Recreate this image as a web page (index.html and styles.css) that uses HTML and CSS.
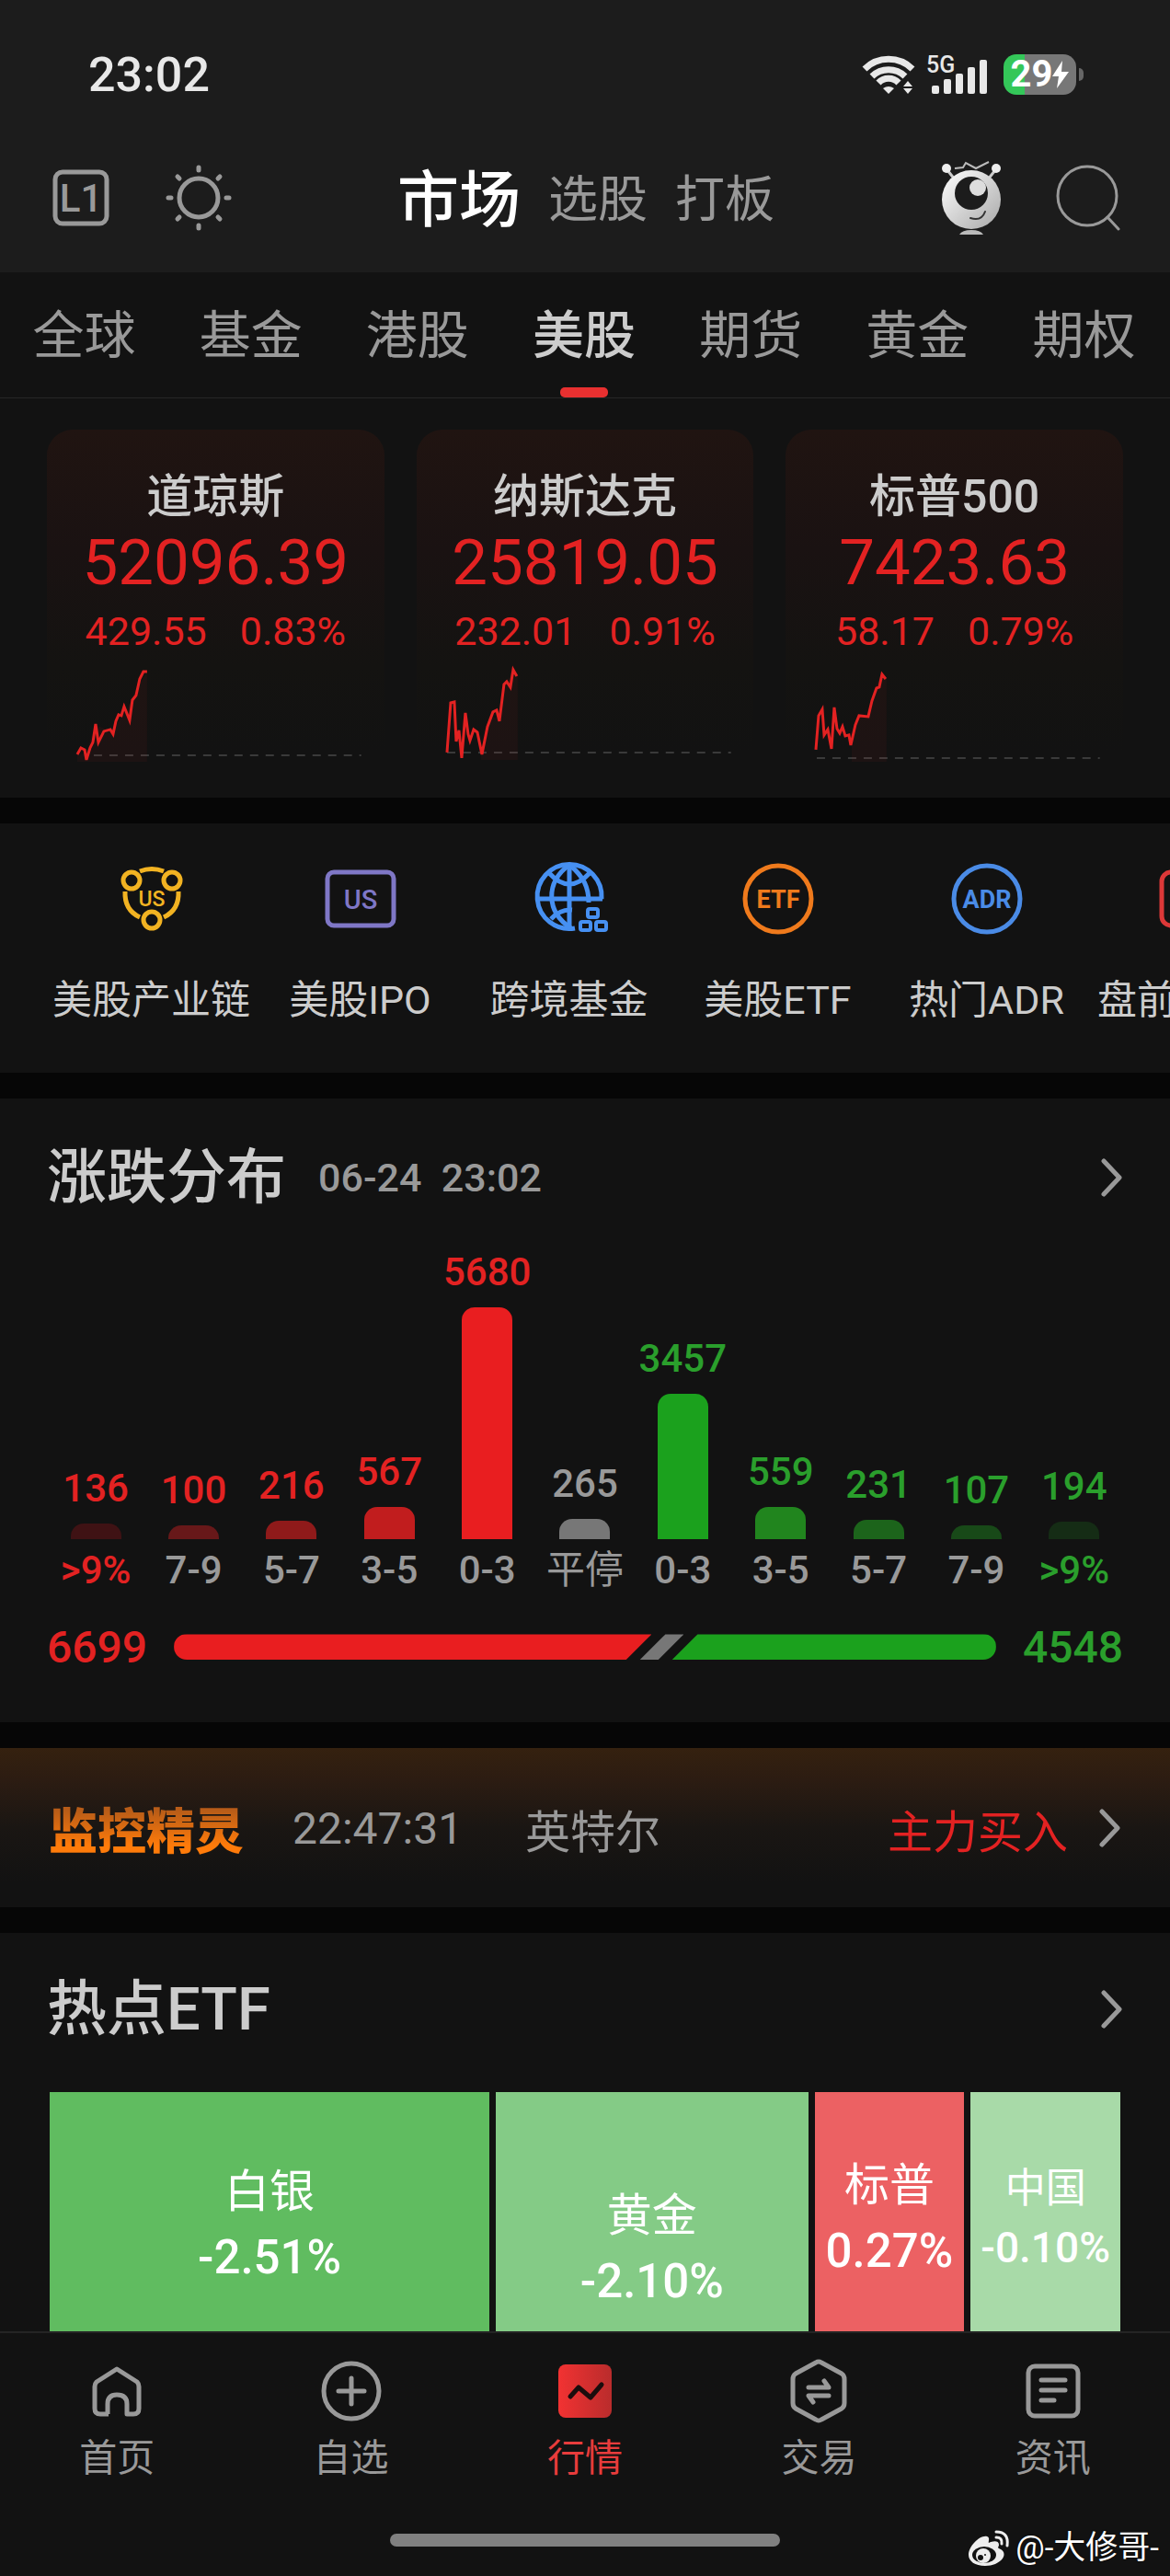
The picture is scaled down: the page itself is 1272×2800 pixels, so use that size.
FILE: index.html
```html
<!DOCTYPE html>
<html lang="zh-CN">
<head>
    <meta charset="UTF-8">
    <meta name="viewport" content="width=device-width, initial-scale=1.0">
    <title>市场 - 美股</title>
    <link rel="stylesheet" href="styles.css">
</head>
<body>
    <header class="header">
        <div class="status-bar">
            <span class="clock">23:02</span>
            <div class="status-icons">
                <svg class="wifi" width="58" height="44" viewBox="0 0 58 44" fill="none" stroke="#e8e8e8" stroke-width="7">
                    <path d="M3 16A37 37 0 0 1 55 16"/>
                    <path d="M11 24A26 26 0 0 1 47 24"/>
                    <path d="M18 31A15 15 0 0 1 40 31"/>
                    <path d="M23 37Q29 33 35 37L29 43Z" fill="#e8e8e8" stroke="none"/>
                    <path d="M45 35L50 29L55 35ZM45 37L50 43L55 37Z" fill="#e8e8e8" stroke="none"/>
                </svg>
                <svg class="signal" width="66" height="52" viewBox="0 -4 66 52" fill="#e8e8e8">
                    <text x="0" y="20" font-size="25" font-weight="500">5G</text>
                    <rect x="6" y="34" width="8" height="9" rx="2"/>
                    <rect x="19" y="27" width="8" height="16" rx="2"/>
                    <rect x="32" y="21" width="8" height="22" rx="2"/>
                    <rect x="45" y="14" width="8" height="29" rx="2"/>
                    <rect x="58" y="6" width="8" height="37" rx="2"/>
                </svg>
                <div class="battery">
                    <span>29</span>
                    <svg width="18" height="30" viewBox="0 0 18 30" fill="#fff"><path d="M11 0L0 17H7L5 30L18 12H10Z"/></svg>
                </div>
            </div>
        </div>
        <div class="title-bar">
            <div class="title-side">
                <button class="icon-btn" aria-label="L1">
                    <svg width="62" height="62" viewBox="0 0 62 62" fill="none" stroke="#999" stroke-width="5">
                        <rect x="3" y="3" width="56" height="56" rx="8"/>
                        <text x="31" y="46" font-size="42" font-weight="500" text-anchor="middle" fill="#999" stroke="none">L1</text>
                    </svg>
                </button>
                <button class="icon-btn" aria-label="主题">
                    <svg width="72" height="72" viewBox="0 0 72 72" fill="none" stroke="#999" stroke-width="5" stroke-linecap="round">
                        <circle cx="36" cy="36" r="21"/>
                        <path d="M36 3V6M36 66V69M3 36H6M66 36H69M13 13L15 15M57 57L59 59M13 59L15 57M57 15L59 13"/>
                    </svg>
                </button>
            </div>
            <nav class="title-tabs">
                <a href="#" class="active">市场</a>
                <a href="#">选股</a>
                <a href="#">打板</a>
            </nav>
            <div class="title-side right">
                <button class="icon-btn" aria-label="助手">
                    <svg width="72" height="84" viewBox="0 0 72 84" fill="none">
                        <defs>
                            <linearGradient id="robot" x1="0" y1="0" x2="1" y2="1">
                                <stop offset="0" stop-color="#fff"/>
                                <stop offset="1" stop-color="#a8a8a8"/>
                            </linearGradient>
                        </defs>
                        <path d="M18 10L27 9L30 4L41 10L55 3" stroke="#bbb" stroke-width="2"/>
                        <path d="M10 12L18 22M62 12L54 22" stroke="#ccc" stroke-width="3"/>
                        <circle cx="9" cy="10" r="5" fill="#eee"/>
                        <circle cx="63" cy="10" r="5" fill="#eee"/>
                        <ellipse cx="36" cy="44" rx="32" ry="32" fill="url(#robot)"/>
                        <circle cx="36" cy="37" r="18" fill="#1c1c1c"/>
                        <circle cx="43" cy="31" r="9" fill="#ddd"/>
                        <path d="M35 64Q47 68 51 57" stroke="#333" stroke-width="2" stroke-linecap="round"/>
                        <path d="M23 82Q26 77 36 77Q46 77 49 82Z" fill="#bbb"/>
                    </svg>
                </button>
                <button class="icon-btn" aria-label="搜索">
                    <svg width="72" height="72" viewBox="0 0 72 72" fill="none" stroke="#999" stroke-width="3" stroke-linecap="round">
                        <circle cx="35" cy="34" r="32"/>
                        <path d="M57 57L69 70"/>
                    </svg>
                </button>
            </div>
        </div>
    </header>

    <nav class="market-tabs">
        <a href="#">全球</a>
        <a href="#">基金</a>
        <a href="#">港股</a>
        <a href="#" class="active">美股</a>
        <a href="#">期货</a>
        <a href="#">黄金</a>
        <a href="#">期权</a>
    </nav>

    <main>
        <section class="indices">
            <a href="#" class="index-card">
                <h2>道琼斯</h2>
                <strong>52096.39</strong>
                <p><span>429.55</span><span>0.83%</span></p>
                <svg viewBox="0 0 367 120" fill="none">
                    <path class="baseline" d="M51 105H342"/>
                    <path class="area" d="M33 104L43 103L52 72L70 78L86 58L96 35L109 14V112H33Z"/>
                    <path class="spark" d="M33 104L37 97L41 99L43 110L47 97L50 91L53 71L56 91L62 79L69 77L72 82L75 68L78 61L81 62L84 52L90 67L93 45L97 40L101 22L105 14H109"/>
                </svg>
            </a>
            <a href="#" class="index-card">
                <h2>纳斯达克</h2>
                <strong>25819.05</strong>
                <p><span>232.01</span><span>0.91%</span></p>
                <svg viewBox="0 0 367 120" fill="none">
                    <path class="baseline" d="M33 102H342"/>
                    <path class="area" d="M70 100L80 62L90 66L96 28L105 12L110 18V110H70Z"/>
                    <path class="spark" d="M33 102L37 48L41 47L43 90L46 78L49 108L53 59L56 82L58 89L62 77L66 80L71 104L77 74L83 58L87 56L90 68L95 28L98 25L102 31L105 12L109 19"/>
                </svg>
            </a>
            <a href="#" class="index-card">
                <h2>标普500</h2>
                <strong>7423.63</strong>
                <p><span>58.17</span><span>0.79%</span></p>
                <svg viewBox="0 0 367 120" fill="none">
                    <path class="baseline" d="M34 108H342"/>
                    <path class="area" d="M72 95L80 63L90 63L98 30L105 17L110 21V112H72Z"/>
                    <path class="spark" d="M33 99L36 62L40 55L42 83L46 77L50 98L53 53L56 76L59 81L62 74L65 84L69 83L71 94L76 72L80 62L90 63L94 46L99 32L102 31L105 17L109 22"/>
                </svg>
            </a>
        </section>

        <nav class="quick-links">
            <a href="#">
                <svg width="88" height="88" viewBox="0 0 88 88" fill="none" stroke="#f2b322" stroke-width="5">
                    <circle cx="22" cy="24" r="9"/>
                    <circle cx="66" cy="24" r="9"/>
                    <circle cx="44" cy="67" r="9"/>
                    <path d="M31 14Q44 9 57 14M15 36Q14 56 31 64M73 36Q74 56 57 64"/>
                    <text class="icon-text" x="44" y="52" font-size="23" fill="#f2b322">US</text>
                </svg>
                美股产业链
            </a>
            <a href="#">
                <svg width="88" height="88" viewBox="0 0 88 88" fill="none" stroke="#7f77c6" stroke-width="5">
                    <rect x="8" y="15" width="72" height="58" rx="7"/>
                    <text class="icon-text" x="44" y="55" font-size="29" fill="#7f77c6">US</text>
                </svg>
                美股IPO
            </a>
            <a href="#">
                <svg width="88" height="88" viewBox="0 0 88 88" fill="none" stroke="#4690f2" stroke-width="5">
                    <path d="M79 44A35 35 0 1 0 50 76M8 44H80M44 7V77"/>
                    <path d="M46 76C18 58 18 26 44 7C60 20 65 32 65 48"/>
                    <path d="M22 16Q44 40 66 16M24 66Q34 55 47 56"/>
                    <g stroke-width="4">
                        <rect x="64" y="55" width="11" height="9" rx="2"/>
                        <rect x="56" y="69" width="11" height="9" rx="2"/>
                        <rect x="73" y="69" width="11" height="9" rx="2"/>
                    </g>
                </svg>
                跨境基金
            </a>
            <a href="#">
                <svg width="88" height="88" viewBox="0 0 88 88" fill="none" stroke="#ef7a1c" stroke-width="5">
                    <circle cx="44" cy="44" r="36"/>
                    <text class="icon-text bold" x="44" y="54" font-size="27" fill="#ef7a1c">ETF</text>
                </svg>
                美股ETF
            </a>
            <a href="#">
                <svg width="88" height="88" viewBox="0 0 88 88" fill="none" stroke="#4a8be6" stroke-width="5">
                    <circle cx="44" cy="44" r="36"/>
                    <text class="icon-text bold" x="44" y="54" font-size="27" fill="#4a8be6">ADR</text>
                </svg>
                热门ADR
            </a>
            <a href="#" class="cut">
                <svg width="88" height="88" viewBox="0 0 88 88" fill="none" stroke="#dc3838" stroke-width="5">
                    <rect x="8" y="15" width="72" height="58" rx="10"/>
                </svg>
                盘前
            </a>
        </nav>

        <section class="distribution">
            <div class="section-head">
                <h2>涨跌分布</h2>
                <time>06-24&nbsp; 23:02</time>
                <a href="#" class="more" aria-label="更多"><svg width="24" height="44" viewBox="0 0 24 44"><path d="M3 4L20 22L3 40"/></svg></a>
            </div>
            <ul class="chart">
                <li class="up edge"><span>136</span><i class="bar up-1" style="height:17px"></i><em>&gt;9%</em></li>
                <li class="up"><span>100</span><i class="bar up-2" style="height:15px"></i><em>7-9</em></li>
                <li class="up"><span>216</span><i class="bar up-3" style="height:20px"></i><em>5-7</em></li>
                <li class="up"><span>567</span><i class="bar up-4" style="height:35px"></i><em>3-5</em></li>
                <li class="up"><span>5680</span><i class="bar up-5" style="height:252px"></i><em>0-3</em></li>
                <li class="flat"><span>265</span><i class="bar" style="height:22px"></i><em>平停</em></li>
                <li class="down"><span>3457</span><i class="bar down-5" style="height:158px"></i><em>0-3</em></li>
                <li class="down"><span>559</span><i class="bar down-4" style="height:35px"></i><em>3-5</em></li>
                <li class="down"><span>231</span><i class="bar down-3" style="height:21px"></i><em>5-7</em></li>
                <li class="down"><span>107</span><i class="bar down-2" style="height:15px"></i><em>7-9</em></li>
                <li class="down edge"><span>194</span><i class="bar down-1" style="height:19px"></i><em>&gt;9%</em></li>
            </ul>
            <div class="totals">
                <span class="total-up">6699</span>
                <div class="ratio">
                    <i class="ratio-up" style="flex-grow:6699"></i>
                    <i class="ratio-flat"></i>
                    <i class="ratio-down" style="flex-grow:4548"></i>
                </div>
                <span class="total-down">4548</span>
            </div>
        </section>

        <section class="monitor">
            <h2>监控精灵</h2>
            <time>22:47:31</time>
            <span>英特尔</span>
            <span class="signal-text">主力买入</span>
            <a href="#" class="more" aria-label="更多"><svg width="24" height="44" viewBox="0 0 24 44"><path d="M3 4L20 22L3 40"/></svg></a>
        </section>

        <section class="hot-etf">
            <div class="section-head">
                <h2>热点ETF</h2>
                <a href="#" class="more" aria-label="更多"><svg width="24" height="44" viewBox="0 0 24 44"><path d="M3 4L20 22L3 40"/></svg></a>
            </div>
            <div class="treemap">
                <a href="#" class="tile silver">白银<b>-2.51%</b></a>
                <a href="#" class="tile gold">黄金<b>-2.10%</b></a>
                <a href="#" class="tile sp">标普<b>0.27%</b></a>
                <a href="#" class="tile china">中国<b>-0.10%</b></a>
            </div>
        </section>
    </main>

    <footer class="bottom">
        <nav class="bottom-nav">
            <a href="#">
                <svg width="72" height="72" viewBox="0 0 72 72" fill="none" stroke="#999" stroke-width="5" stroke-linejoin="round">
                    <path d="M27 61H18Q12 61 12 55V31Q12 28 14 26L36 12L58 26Q60 28 60 31V55Q60 61 54 61H47V50Q47 40 36 40Q26 40 26 50V61"/>
                </svg>
                首页
            </a>
            <a href="#">
                <svg width="72" height="72" viewBox="0 0 72 72" fill="none" stroke="#999" stroke-width="5" stroke-linecap="round">
                    <circle cx="36" cy="36" r="30"/>
                    <path d="M36 22V50M22 36H50"/>
                </svg>
                自选
            </a>
            <a href="#" class="active">
                <svg width="72" height="72" viewBox="0 0 72 72" fill="none">
                    <defs>
                        <linearGradient id="quote">
                            <stop offset="0" stop-color="#f23232"/>
                            <stop offset="1" stop-color="#b92c2c"/>
                        </linearGradient>
                    </defs>
                    <rect x="7" y="7" width="58" height="58" rx="8" fill="url(#quote)"/>
                    <path d="M20 42L29 32L42 43L54 29" stroke="#1b0d0d" stroke-width="5" stroke-linecap="round" stroke-linejoin="round"/>
                </svg>
                行情
            </a>
            <a href="#">
                <svg width="72" height="72" viewBox="0 0 72 72" fill="none" stroke="#999" stroke-width="5" stroke-linecap="round" stroke-linejoin="round">
                    <path d="M33 5Q36 3 39 5L61 17Q64 19 64 23V49Q64 53 61 55L39 67Q36 69 33 67L11 55Q8 53 8 49V23Q8 19 11 17Z"/>
                    <path d="M25 32H47L42 25M47 41H25L30 48"/>
                </svg>
                交易
            </a>
            <a href="#">
                <svg width="72" height="72" viewBox="0 0 72 72" fill="none" stroke="#999" stroke-width="5" stroke-linecap="round">
                    <rect x="9" y="9" width="54" height="54" rx="7"/>
                    <path d="M23 24H49M23 35H49M23 46H37"/>
                </svg>
                资讯
            </a>
        </nav>
        <div class="home-indicator"></div>
        <div class="watermark">
            <svg width="46" height="40" viewBox="0 0 46 40">
                <path d="M1 27C1 17 14 5 21 7C25 8 22 13 23 14C27 12 34 11 34 16C34 19 31 19 36 21C45 26 36 39 19 39C8 39 1 34 1 27Z" fill="#eee"/>
                <ellipse cx="18" cy="27" rx="13" ry="9" fill="#121212"/>
                <circle cx="17" cy="28" r="8" fill="#eee"/>
                <circle cx="14" cy="30" r="3" fill="#121212"/>
                <circle cx="19" cy="27" r="1" fill="#121212"/>
                <path d="M31 2Q45 2 43 17M31 8Q38 8 37 15" fill="none" stroke="#eee" stroke-width="3" stroke-linecap="round"/>
            </svg>
            @-大修哥-
        </div>
    </footer>
</body>
</html>
```

FILE: styles.css
```css
:root {
    --bg: #121212;
    --bg-header: #1c1c1c;
    --bg-gap: #060606;
    --text: #ccc;
    --muted: #999;
    --red: #e32222;
    --green: #2a9f2c;
}

* {
    box-sizing: border-box;
}

body {
    margin: 0;
    min-height: 100vh;
    background: var(--bg);
    color: var(--text);
    font-family: Roboto, "Noto Sans CJK SC", sans-serif;
    overflow-x: hidden;
}

a {
    color: inherit;
    text-decoration: none;
}

h2, p, ul {
    margin: 0;
    padding: 0;
}

i, em {
    font-style: normal;
}

svg {
    display: block;
}

/* Header */
.header {
    background: var(--bg-header);
}

.status-bar {
    display: flex;
    justify-content: space-between;
    align-items: center;
    height: 134px;
    padding: 28px 102px 0 96px;
}

.clock {
    font-size: 52px;
    font-weight: 500;
    color: #e8e8e8;
}

.status-icons {
    display: flex;
    align-items: center;
    gap: 12px;
}

.battery {
    position: relative;
    display: flex;
    align-items: center;
    justify-content: center;
    width: 79px;
    height: 44px;
    margin-left: 6px;
    border-radius: 14px;
    background: linear-gradient(90deg, #34c759 29%, #777 29%);
    color: #fff;
    font-size: 40px;
    font-weight: 700;
    line-height: 44px;
}

.battery::after {
    content: "";
    position: absolute;
    left: 82px;
    top: 15px;
    width: 5px;
    height: 14px;
    border-radius: 0 5px 5px 0;
    background: #666;
}

.title-bar {
    display: grid;
    grid-template-columns: 1fr auto 1fr;
    align-items: center;
    height: 162px;
    padding: 0 53px 0 57px;
}

.title-side {
    display: flex;
    align-items: center;
    gap: 61px;
}

.title-side.right {
    justify-content: flex-end;
    gap: 55px;
}

.icon-btn {
    padding: 0;
    border: none;
    background: none;
    cursor: pointer;
    font-family: inherit;
}

.title-tabs {
    display: flex;
    align-items: center;
    gap: 30px;
    padding: 6px 2px 0 0;
    color: var(--muted);
    font-size: 54px;
    line-height: 80px;
}

.title-tabs .active {
    color: #fff;
    font-size: 67px;
    font-weight: 500;
}

/* Market tabs */
.market-tabs {
    display: grid;
    grid-template-columns: repeat(7, 1fr);
    height: 137px;
    padding: 0 3px 0 1px;
    border-bottom: 1px solid #262626;
    color: var(--muted);
    font-size: 56px;
    line-height: 138px;
    text-align: center;
}

.market-tabs a {
    position: relative;
    height: 136px;
}

.market-tabs .active {
    color: var(--text);
    font-weight: 500;
}

.market-tabs .active::after {
    content: "";
    position: absolute;
    left: 50%;
    bottom: 0;
    width: 52px;
    height: 11px;
    margin-left: -26px;
    border-radius: 5px;
    background: #e83030;
}

main > * {
    border-bottom: 28px solid var(--bg-gap);
}

main > :last-child {
    border-bottom: none;
}

/* Index cards */
.indices {
    display: grid;
    grid-template-columns: repeat(3, 1fr);
    gap: 35px;
    padding: 34px 51px 31px;
}

.index-card {
    padding-top: 43px;
    border-radius: 28px 28px 0 0;
    background: linear-gradient(#201411, #1a1212 35%, #141311 70%, var(--bg) 95%);
    color: var(--red);
    text-align: center;
}

.index-card h2 {
    color: var(--text);
    font-size: 50px;
    font-weight: 500;
    line-height: 60px;
}

.index-card strong {
    display: block;
    font-size: 69px;
    font-weight: 400;
    line-height: 84px;
}

.index-card p {
    display: flex;
    justify-content: center;
    gap: 36px;
    margin: 7px 0 5px;
    font-size: 43px;
    line-height: 50px;
}

.index-card svg {
    width: 100%;
}

.baseline {
    stroke: #3a3a3a;
    stroke-width: 2;
    stroke-dasharray: 9 8;
}

.area {
    fill: rgba(227, 34, 34, 0.05);
}

.spark {
    stroke: var(--red);
    stroke-width: 3;
}

/* Quick links */
.quick-links {
    display: flex;
    padding: 38px 0 49px 51px;
    overflow: hidden;
}

.quick-links a {
    display: flex;
    flex: 0 0 227px;
    flex-direction: column;
    align-items: center;
    gap: 36px;
    font-size: 43px;
    line-height: 60px;
    white-space: nowrap;
}

.quick-links .cut {
    align-items: flex-start;
    padding-left: 7px;
}

.quick-links .cut svg {
    margin-left: 62px;
}

.icon-text {
    stroke: none;
    text-anchor: middle;
    font-weight: 500;
}

.icon-text.bold {
    font-weight: 700;
}

/* Section heading */
.section-head {
    display: flex;
    align-items: center;
    line-height: 80px;
}

.section-head h2 {
    font-size: 65px;
    font-weight: 500;
}

.section-head time {
    margin-left: 35px;
    color: var(--muted);
    font-size: 43px;
    font-weight: 500;
}

.more {
    margin-left: auto;
}

.more path {
    fill: none;
    stroke: var(--muted);
    stroke-width: 5;
    stroke-linecap: round;
    stroke-linejoin: round;
}

/* Rise and fall distribution */
.distribution {
    padding: 46px 51px 53px;
}

.chart {
    display: grid;
    grid-template-columns: repeat(11, 1fr);
    align-items: end;
    margin-top: 38px;
    font-size: 42px;
    font-weight: 500;
    line-height: 50px;
    list-style: none;
}

.chart li {
    display: flex;
    flex-direction: column;
    align-items: center;
}

.chart em {
    margin-top: 9px;
    color: var(--muted);
    white-space: nowrap;
}

.flat em {
    font-weight: 400;
}

.bar {
    width: 55px;
    margin-top: 13px;
    border-radius: 14px 14px 0 0;
    background: #777;
}

.up, .up.edge em, .total-up {
    color: var(--red);
}

.down, .down.edge em, .total-down {
    color: var(--green);
}

.flat {
    color: var(--muted);
}

.up-1 { background: #3f1214; }
.up-2 { background: #671819; }
.up-3 { background: #8f1a1a; }
.up-4 { background: #c11d1e; }
.up-5 { background: #e91e20; }
.down-1 { background: #152c15; }
.down-2 { background: #184918; }
.down-3 { background: #1c641b; }
.down-4 { background: #21851e; }
.down-5 { background: #1ba11d; }

.totals {
    display: flex;
    align-items: center;
    gap: 29px;
    margin-top: 30px;
    font-size: 48px;
    font-weight: 500;
    line-height: 57px;
}

.ratio {
    display: flex;
    flex: 1;
    height: 28px;
    border-radius: 14px;
    overflow: hidden;
}

.ratio-up {
    background: #e91e20;
    clip-path: polygon(0 0, 100% 0, calc(100% - 28px) 100%, 0 100%);
}

.ratio-flat {
    width: 48px;
    margin: 0 -13px;
    background: #777;
    clip-path: polygon(28px 0, 100% 0, 20px 100%, 0 100%);
}

.ratio-down {
    background: #1ba11d;
    clip-path: polygon(28px 0, 100% 0, 100% 100%, 0 100%);
}

/* Monitor */
.monitor {
    display: flex;
    align-items: center;
    height: 201px;
    padding: 2px 53px 0;
    background: linear-gradient(#35210f, #2c1c12 20%, #1a1613 50%, var(--bg) 85%);
    color: var(--muted);
    font-size: 49px;
}

.monitor h2 {
    background: linear-gradient(#b85c18 25%, #ff7b0a 75%);
    -webkit-background-clip: text;
    background-clip: text;
    color: transparent;
    font-size: 53px;
    font-weight: 900;
}

.monitor time {
    margin: 0 68px 0 53px;
    font-size: 48px;
}

.signal-text {
    margin-left: auto;
    color: var(--red);
}

.monitor .more {
    margin-left: 34px;
}

/* Hot ETF */
.hot-etf {
    padding: 43px 51px 0;
}

.treemap {
    display: grid;
    grid-template-columns: 479fr 340fr 163fr 163fr;
    align-items: start;
    gap: 7px;
    height: 260px;
    margin: 50px 3px 0;
    overflow: hidden;
}

.tile {
    display: flex;
    flex-direction: column;
    align-items: center;
    justify-content: center;
    min-width: 0;
    padding-top: 3px;
    color: #fff;
    font-size: 49px;
    line-height: 71px;
}

.tile b {
    font-size: 51px;
    font-weight: 500;
}

.silver {
    height: 286px;
    background: #60bc60;
}

.gold {
    height: 338px;
    background: #84cb86;
}

.sp {
    height: 272px;
    background: #ec6163;
}

.china {
    height: 272px;
    background: #a8daa8;
    font-size: 44px;
    line-height: 64px;
}

.china b {
    font-size: 46px;
}

/* Bottom bar */
.bottom {
    position: sticky;
    bottom: 0;
    height: 266px;
    padding-top: 27px;
    border-top: 2px solid #242424;
    background: var(--bg);
}

.bottom-nav {
    display: grid;
    grid-template-columns: repeat(5, 1fr);
    color: var(--muted);
    font-size: 41px;
    line-height: 52px;
}

.bottom-nav a {
    display: flex;
    flex-direction: column;
    align-items: center;
    gap: 11px;
}

.bottom-nav .active {
    color: #e83c3c;
}

.home-indicator {
    width: 33.4%;
    height: 14px;
    margin: 56px auto 0;
    border-radius: 7px;
    background: #808080;
}

.watermark {
    position: absolute;
    right: 12px;
    bottom: 8px;
    display: flex;
    align-items: center;
    gap: 6px;
    color: #fff;
    font-size: 35px;
    line-height: 44px;
    text-shadow: 0 0 2px #000;
}
```
